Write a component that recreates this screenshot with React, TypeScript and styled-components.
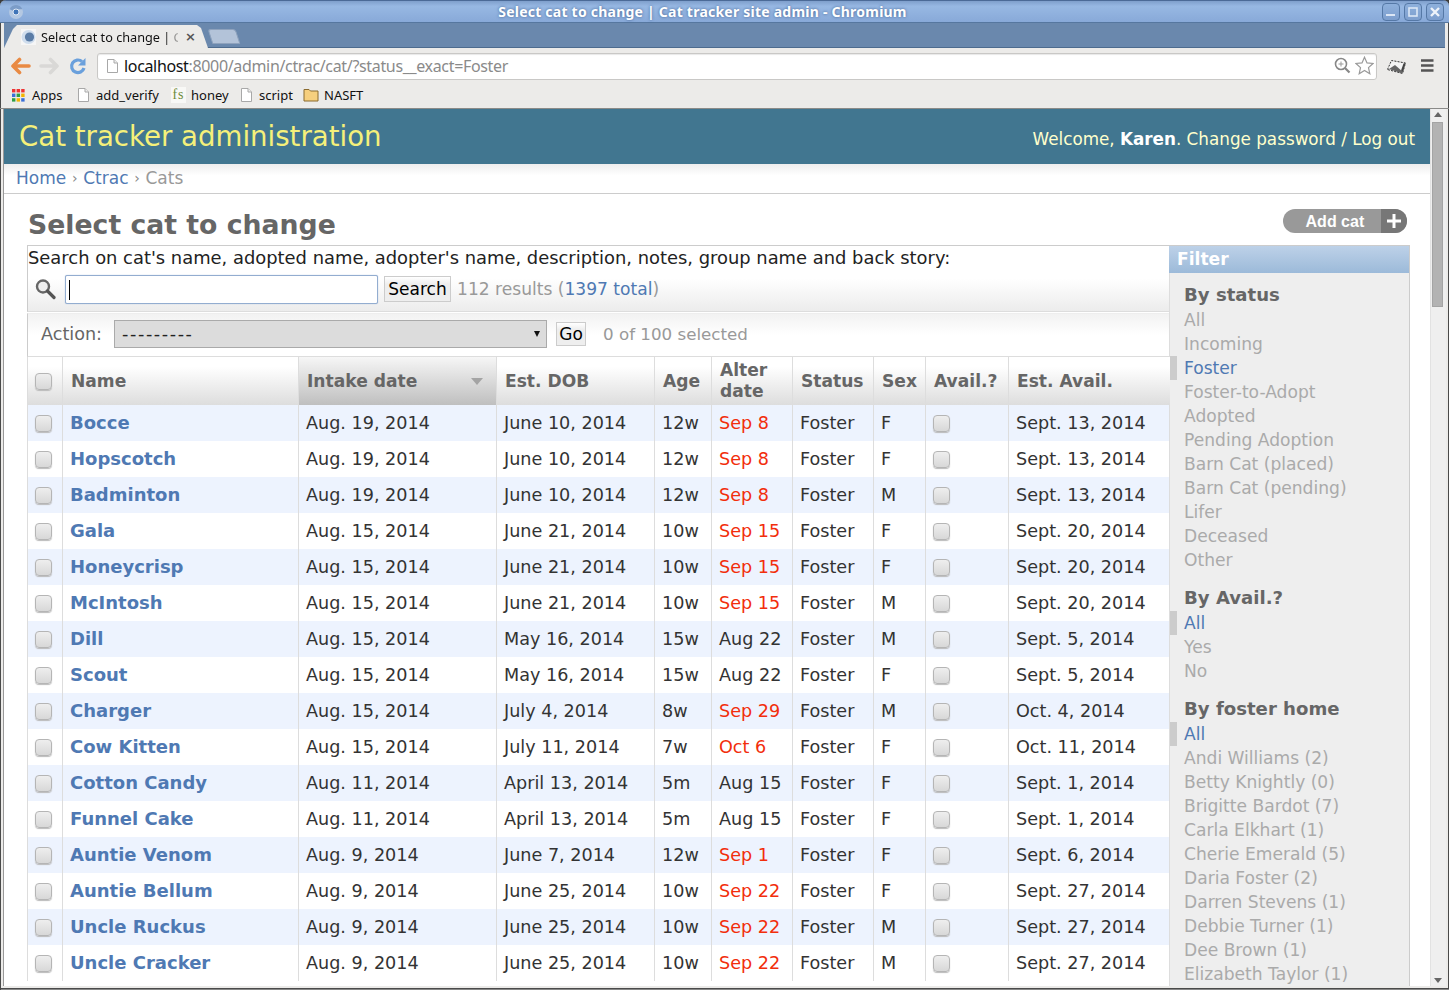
import React from "react";
import styled, { createGlobalStyle } from "styled-components";

const Global = createGlobalStyle`
  html, body { margin: 0; padding: 0; width: 1449px; height: 990px; overflow: hidden; background: #3c3c3c; }
  * { box-sizing: border-box; }
  #root { width: 1449px; height: 990px; }
`;
const V = `"DejaVu Sans", sans-serif`;
const UI = `"Noto Sans", "Open Sans", sans-serif`;
const LINK = "#4f79b3";

const Win = styled.div`
  width: 1449px; height: 990px; display: flex; flex-direction: column; overflow: hidden;
  background: #ecebe9; border-radius: 6px 6px 0 0; font-family: ${V};
  box-shadow: inset 1px 0 #4a4a4a, inset -1px 0 #4a4a4a;
`;
const TitleBar = styled.div`
  height: 23px; flex: none; position: relative; display: flex; align-items: center; justify-content: center;
  background: linear-gradient(#7f9fcc, #97b8e3 25%, #88a9d8); border-top: 1px solid #4b6a97; border-bottom: 1px solid #56779f;
  padding: 0 44px 0 0;
`;
const TitleText = styled.span`
  color: #fff; font: 700 14px ${UI}; letter-spacing: .23px; text-shadow: 0 0 3px #3f5f90; white-space: nowrap;
`;
const Logo = styled.svg` position: absolute; left: 8px; top: 3px; `;
const WinBtns = styled.div` position: absolute; right: 5px; top: 2px; display: flex; gap: 4px; `;
const WinBtn = styled.div`
  width: 18px; height: 18px; border: 1px solid #5578a6; border-radius: 4px; display: flex; align-items: center; justify-content: center;
  background: linear-gradient(#8eb0dc, #7d9ecd);
`;
const TabStrip = styled.div`
  height: 25px; flex: none; background: #6a88ad; display: flex; align-items: flex-end; border-bottom: 1px solid #4d6b8e; margin: 0 4px;
`;
const Tab = styled.div`
  width: 204px; height: 23px; margin-bottom: -1px; flex: none; background: #ecebe9; clip-path: polygon(0 100%, 9px 4px, 13px 0, 193px 0, 197px 3px, 204px 100%);
  display: flex; align-items: center; padding: 0 0 0 17px; gap: 5px; font: 13px ${UI}; color: #111;
`;
const TabLabel = styled.span`
  width: 137px; white-space: nowrap; font-size: 12.7px;
  -webkit-mask-image: linear-gradient(90deg, #000 124px, rgba(0,0,0,.25) 137px);
`;
const TabX = styled.span` font: 700 13px ${V}; color: #555; margin-left: 2px; `;
const NewTab = styled.div`
  width: 28px; height: 15px; margin: 0 0 3px 2px; background: #b3c3d9; border: 1px solid #8ea2bd; transform: skewX(18deg); border-radius: 3px 3px 1px 1px;
`;
const Toolbar = styled.div` height: 36px; flex: none; display: flex; align-items: center; padding: 0 0 0 11px; `;
const NavIcon = styled.svg<{ $ml?: number }>` flex: none; margin-left: ${(p) => p.$ml ?? 0}px; `;
const Omni = styled.div`
  width: 1280px; height: 27px; margin-left: 10px; background: #fff; border: 1px solid #c9c8c6; border-radius: 3px; display: flex; align-items: center; padding: 0 0 0 7px;
  font: 16px ${UI}; letter-spacing: -.34px; color: #8a8a8a; white-space: nowrap; position: relative; box-shadow: inset 0 1px 1px #e8e8e8;
`;
const Host = styled.span` color: #111; margin-left: 4px; `;
const OmniRight = styled.div` position: absolute; right: 2px; top: 2px; display: flex; gap: 4px; align-items: center; `;
const Bookmarks = styled.div`
  height: 24px; flex: none; display: flex; align-items: center; padding: 0 0 2px 11px; font: 13px ${UI}; color: #111;
`;
const Bookmark = styled.div<{ $w: number }>` display: flex; align-items: center; gap: 5px; width: ${(p) => p.$w}px; white-space: nowrap; flex: none; `;
const Fs = styled.span` width: 15px; height: 16px; background: #f8f8f6; text-align: center; font: 14px/15px "Liberation Serif", serif; color: #6d8b3a; letter-spacing: 1px; `;
const Body = styled.div`
  flex: 1; min-height: 0; display: flex; padding: 0 3px 4px 4px; border-top: 1px solid #8a8a88;
  box-shadow: inset 1px 0 #4a4a4a, inset 0 -1px #888, inset 0 -2px #4a4a4a;
`;
const FrameLine = styled.div` width: 1px; margin-left: -1px; background: #999; flex: none; `;
const Page = styled.div` width: 1426px; background: #fff; overflow: hidden; flex: none; `;
const ScrollBar = styled.div` width: 16px; flex: none; background: #efefef; position: relative; padding: 13px 2px 0 1px; border-left: 1px solid #e2e2e2; `;
const Thumb = styled.div` height: 185px; width: 11px; background: #b3b3b3; border: 1px solid #a4a4a4; `;
const ArrowUp = styled.div` position: absolute; top: 3px; left: 3px; width: 0; height: 0; border: 4px solid transparent; border-top: 0; border-bottom: 5px solid #666; `;
const ArrowDown = styled.div` position: absolute; bottom: 3px; left: 3px; width: 0; height: 0; border: 4px solid transparent; border-bottom: 0; border-top: 5px solid #666; `;

const Header = styled.header`
  height: 55px; background: #417690; display: flex; justify-content: space-between; align-items: center; padding: 0 15px;
`;
const Brand = styled.h1` margin: 0; font: 400 27.6px ${V}; color: #f5f07a; `;
const Welcome = styled.div` font: 16.8px ${V}; color: #ffc; padding-top: 5px; strong { color: #fff; font-weight: 700; } `;
const Crumbs = styled.nav`
  height: 30px; padding: 0 12px 2px; display: flex; align-items: center; font: 17px ${V}; color: #999; border-bottom: 1px solid #ccc;
  background: linear-gradient(#eee, #fff 40%);
  a { color: ${LINK}; }
`;
const Sep = styled.span` font-size: 14px; color: #888; margin: 0 5.7px; `;
const Content = styled.main` padding: 0 0 0 23px; `;
const TitleRow = styled.div` height: 51px; width: 1380px; display: flex; justify-content: space-between; align-items: flex-start; `;
const H2 = styled.h2` margin: 13px 0 0 1px; font: 700 26.7px/36px ${V}; color: #666; `;
const AddBtn = styled.div`
  margin-top: 15px; height: 24px; width: 124px; display: flex; border-radius: 12px; overflow: hidden; background: #999; color: #fff; font: 700 16px "Liberation Sans", sans-serif;
`;
const AddLabel = styled.span` width: 97px; text-align: right; padding-right: 15px; line-height: 25px; `;
const AddPlus = styled.span` width: 26px; margin-left: 2px; background: #777; display: flex; align-items: center; justify-content: center; `;
const Columns = styled.div` display: flex; `;
const Main = styled.div` width: 1142px; flex: none; border-top: 1px solid #ccc; `;
const SearchBar = styled.div`
  height: 66px; border-left: 1px solid #ccc; border-bottom: 1px solid #ddd; background: linear-gradient(#fff 50%, #ececec); color: #222; font: 17.9px ${V};
`;
const SearchHelp = styled.div` height: 24px; line-height: 23px; white-space: nowrap; `;
const SearchRow = styled.div` display: flex; align-items: center; height: 33px; padding-top: 5px; `;
const SearchIcon = styled.svg` margin: 0 9px 0 6px; flex: none; `;
const SearchInput = styled.div`
  width: 313px; height: 29px; background: #fff; border: 1px solid #93add0; border-radius: 2px; box-shadow: 0 0 1px #93add0; padding: 4px 3px;
`;
const Caret = styled.div` width: 1px; height: 20px; background: #000; `;
const Btn = styled.button<{ $w: number; $h: number; $mr: number; $ml: number }>`
  width: ${(p) => p.$w}px; height: ${(p) => p.$h}px; margin: 0 ${(p) => p.$mr}px 0 ${(p) => p.$ml}px; padding: 0;
  background: linear-gradient(#fff, #eee 30%); border: 1px solid #ccc; color: #000; font: 17px ${V}; flex: none;
`;
const Results = styled.span` color: #999; font: 17.1px ${V}; a { color: ${LINK}; } `;
const Counter = styled.span` color: #999; font: 16.7px ${V}; `;
const ActionBar = styled.div`
  height: 44px; margin-top: 1px; border-left: 1px solid #ccc; border-bottom: 1px solid #ddd; border-top: 1px solid #eee; background: linear-gradient(#f2f2f2, #fff 50%);
  display: flex; align-items: center; padding: 0 0 2px 13px; font: 17.6px ${V}; color: #666;
`;
const Sel = styled.div`
  width: 433px; height: 28px; margin: 0 9px 0 12px; background: #dcdcdc; border: 1px solid #aaa; color: #222; padding: 0 6px 0 7px; display: flex; justify-content: space-between; align-items: center; font-size: 17.6px; letter-spacing: 1.6px;
`;
const Caretdown = styled.span` width: 0; height: 0; border: 3.5px solid transparent; border-top: 6px solid #111; border-bottom: 0; `;
const Tbl = styled.table`
  table-layout: fixed; width: 1142px; border-collapse: separate; border-spacing: 0; font: 17.6px ${V}; color: #333; border-left: 1px solid #ddd;
`;
const Th = styled.th<{ $sorted?: boolean }>`
  height: 48px; padding: 0 8px; text-align: left; font-weight: 700; font-size: 17.1px; line-height: 21px; color: #666; border-left: 1px solid #ddd; position: relative;
  background: ${(p) => (p.$sorted ? "linear-gradient(#f6f6f6, #bfbfbf)" : "linear-gradient(#fff 20%, #ddd)")};
  &:first-child { border-left: 0; padding: 0 0 0 7px; }
`;
const SortMark = styled.span`
  position: absolute; right: 13px; top: 21px; width: 0; height: 0; border: 6px solid transparent; border-top: 7px solid #a4a4a4; border-bottom: 0;
`;
const Td = styled.td`
  height: 36px; padding: 0 7px; white-space: nowrap; border-left: 1px solid #ddd; overflow: hidden;
  &:first-child { border-left: 0; padding: 0 0 0 7px; }
`;
const Row = styled.tr<{ $odd: boolean }>` background: ${(p) => (p.$odd ? "#edf3fe" : "#fff")}; `;
const NameLink = styled.a` color: ${LINK}; font-weight: 700; font-size: 18px; vertical-align: 1px; `;
const Alter = styled.span<{ $red: boolean }>` color: ${(p) => (p.$red ? "#f22e0c" : "#333")}; `;
const HeadCheck = styled.span`
  display: inline-block; width: 17px; height: 17px; vertical-align: middle; border: 1px solid #b5b5b5; border-radius: 4px; background: linear-gradient(#eee, #d8d8d8); box-shadow: 0 1px 1px #bbb;
`;
const Check = styled(HeadCheck)` margin-top: -2px; `;
const Filter = styled.aside` width: 241px; flex: none; border-right: 1px solid #ccc; background: #eee; `;
const FilterHead = styled.div`
  height: 28px; background: linear-gradient(#bdd1e8, #9cbad9); color: #fff; font: 700 17.1px/27px ${V}; padding-left: 8px; border-top: 1px solid #ccc;
`;
const FilterBody = styled.div` padding: 9px 0 0 0; border-left: 1px solid #ddd; `;
const FilterTitle = styled.div` font: 700 18.1px/26px ${V}; color: #666; padding-left: 14px; height: 26px; `;
const FilterGroup = styled.div<{ $gap: number }>` margin-bottom: ${(p) => p.$gap}px; `;
const FilterItem = styled.div<{ $on?: boolean }>`
  height: 24px; line-height: 24px; font-size: 17.1px; padding-left: ${(p) => (p.$on ? 7 : 14)}px; color: ${(p) => (p.$on ? LINK : "#aaa")}; white-space: nowrap;
  border-left: ${(p) => (p.$on ? "7px solid #ccc" : "0")};
`;

const rows: string[][] = [
  ["Bocce","Aug. 19, 2014","June 10, 2014","12w","Sep 8","F","Sept. 13, 2014"],
  ["Hopscotch","Aug. 19, 2014","June 10, 2014","12w","Sep 8","F","Sept. 13, 2014"],
  ["Badminton","Aug. 19, 2014","June 10, 2014","12w","Sep 8","M","Sept. 13, 2014"],
  ["Gala","Aug. 15, 2014","June 21, 2014","10w","Sep 15","F","Sept. 20, 2014"],
  ["Honeycrisp","Aug. 15, 2014","June 21, 2014","10w","Sep 15","F","Sept. 20, 2014"],
  ["McIntosh","Aug. 15, 2014","June 21, 2014","10w","Sep 15","M","Sept. 20, 2014"],
  ["Dill","Aug. 15, 2014","May 16, 2014","15w","Aug 22","M","Sept. 5, 2014"],
  ["Scout","Aug. 15, 2014","May 16, 2014","15w","Aug 22","F","Sept. 5, 2014"],
  ["Charger","Aug. 15, 2014","July 4, 2014","8w","Sep 29","M","Oct. 4, 2014"],
  ["Cow Kitten","Aug. 15, 2014","July 11, 2014","7w","Oct 6","F","Oct. 11, 2014"],
  ["Cotton Candy","Aug. 11, 2014","April 13, 2014","5m","Aug 15","F","Sept. 1, 2014"],
  ["Funnel Cake","Aug. 11, 2014","April 13, 2014","5m","Aug 15","F","Sept. 1, 2014"],
  ["Auntie Venom","Aug. 9, 2014","June 7, 2014","12w","Sep 1","F","Sept. 6, 2014"],
  ["Auntie Bellum","Aug. 9, 2014","June 25, 2014","10w","Sep 22","F","Sept. 27, 2014"],
  ["Uncle Ruckus","Aug. 9, 2014","June 25, 2014","10w","Sep 22","M","Sept. 27, 2014"],
  ["Uncle Cracker","Aug. 9, 2014","June 25, 2014","10w","Sep 22","M","Sept. 27, 2014"],
];
const widths = [34, 236, 198, 158, 57, 81, 81, 52, 83, 162];
const heads = ["Intake date", "Est. DOB", "Age", "Alter date", "Status", "Sex", "Avail.?", "Est. Avail."];

const filters: { title: string; on: number; gap: number; items: string[] }[] = [
  { title: "By status", on: 3, gap: 13, items: ["All","Incoming","Foster","Foster-to-Adopt","Adopted","Pending Adoption","Barn Cat (placed)","Barn Cat (pending)","Lifer","Deceased","Other"] },
  { title: "By Avail.?", on: 1, gap: 13, items: ["All","Yes","No"] },
  { title: "By foster home", on: 1, gap: 0, items: ["All","Andi Williams (2)","Betty Knightly (0)","Brigitte Bardot (7)","Carla Elkhart (1)","Cherie Emerald (5)","Daria Foster (2)","Darren Stevens (1)","Debbie Turner (1)","Dee Brown (1)","Elizabeth Taylor (1)"] },
];

const PageIcon = () => (
  <svg width="15" height="16" viewBox="0 0 15 16">
    <path d="M2.5 1.5h6.5l3.5 3.5v9.5h-10z" fill="#fff" stroke="#a8a8a8" />
    <path d="M9 1.5v3.5h3.5" fill="#eee" stroke="#a8a8a8" />
  </svg>
);

export default function App() {
  return (
    <Win>
      <Global />
      <TitleBar>
        <Logo width="16" height="16" viewBox="0 0 16 16">
          <circle cx="8" cy="8" r="7" fill="#b4c8e2" />
          <path d="M1.6 5.2A7 7 0 0 1 14.4 5.2H8.5a3 3 0 0 0-3.6 1.6z" fill="#7b9cc8" />
          <circle cx="8" cy="8" r="3" fill="#3f74b8" stroke="#dfe8f4" />
        </Logo>
        <TitleText>Select cat to change | Cat tracker site admin - Chromium</TitleText>
        <WinBtns>
          <WinBtn>
            <svg width="10" height="10" viewBox="0 0 10 10"><rect x="0" y="7" width="9" height="2" fill="#dbe6f5" /></svg>
          </WinBtn>
          <WinBtn>
            <svg width="10" height="10" viewBox="0 0 10 10"><rect x="1" y="1" width="8" height="8" fill="none" stroke="#dbe6f5" strokeWidth="1.6" /></svg>
          </WinBtn>
          <WinBtn>
            <svg width="10" height="10" viewBox="0 0 10 10"><path d="M1 1l8 8M9 1l-8 8" stroke="#eef3fa" strokeWidth="2.4" /></svg>
          </WinBtn>
        </WinBtns>
      </TitleBar>
      <TabStrip>
        <Tab>
          <svg width="15" height="16" viewBox="0 0 15 16">
            <rect width="15" height="16" fill="#f6f6f6" />
            <circle cx="7.5" cy="8" r="7" fill="#cfdded" />
            <circle cx="8.5" cy="8" r="4.6" fill="#5a7ca6" />
          </svg>
          <TabLabel>Select cat to change | C</TabLabel>
          <TabX>×</TabX>
        </Tab>
        <NewTab />
      </TabStrip>
      <Toolbar>
        <NavIcon width="20" height="18" viewBox="0 0 20 18">
          <path d="M8.5 2.5 L2 9 L8.5 15.5 M3 9 H18" fill="none" stroke="#e98a43" strokeWidth="3.6" strokeLinecap="round" strokeLinejoin="round" />
        </NavIcon>
        <NavIcon $ml={8} width="20" height="18" viewBox="0 0 20 18">
          <path d="M11.5 2.5 L18 9 L11.5 15.5 M17 9 H2" fill="none" stroke="#d9d8d6" strokeWidth="3.6" strokeLinecap="round" strokeLinejoin="round" />
        </NavIcon>
        <NavIcon $ml={10} width="18" height="18" viewBox="0 0 18 18">
          <path d="M15 11a6.3 6.3 0 1 1-2-6.5" fill="none" stroke="#6aa0dc" strokeWidth="3.2" />
          <path d="M16.5 1v7.5H9z" fill="#6aa0dc" />
        </NavIcon>
        <Omni>
          <PageIcon />
          <Host>localhost</Host>:8000/admin/ctrac/cat/?status__exact=Foster
          <OmniRight>
            <svg width="17" height="17" viewBox="0 0 17 17">
              <circle cx="7" cy="7" r="5.5" fill="#fff" stroke="#888" strokeWidth="1.6" />
              <path d="M11 11l4.5 4.5" stroke="#888" strokeWidth="2.2" />
              <path d="M4.5 7h5M7 4.5v5" stroke="#999" />
            </svg>
            <svg width="19" height="19" viewBox="0 0 19 19">
              <path d="M9.5 1.2l2.5 5.7 6 .6-4.5 4.1 1.3 6.1-5.3-3.2-5.3 3.2 1.3-6.1L1 7.5l6-.6z" fill="#fff" stroke="#999" strokeWidth="1.2" />
            </svg>
          </OmniRight>
        </Omni>
        <NavIcon $ml={9} width="21" height="17" viewBox="0 0 21 17">
          <path d="M1.5 11.5L5.5 2.5 19.5 5 16.5 15.5z" fill="#f4f4f4" stroke="#333" strokeDasharray="2 1.2" />
          <path d="M3 11l6-4 8 7-1 1.5z" fill="#666" />
          <path d="M17 14l2.5-9-2 .5-2.5 7z" fill="#444" />
        </NavIcon>
        <NavIcon $ml={13} width="14" height="14" viewBox="0 0 14 14">
          <path d="M1 1.5h12.5M1 6.5h12.5M1 11.5h12.5" stroke="#555" strokeWidth="2.6" />
        </NavIcon>
      </Toolbar>
      <Bookmarks>
        <Bookmark $w={65}>
          <svg width="16" height="15" viewBox="0 0 16 15">
            {[0, 1, 2].flatMap((r) =>
              [0, 1, 2].map((c) => (
                <rect key={`${r}${c}`} x={1 + c * 4.6} y={1 + r * 4.6} width="3.4" height="3.4" fill={[["#e33","#e33","#e33"],["#3a6fd8","#2f9e44","#f4b400"],["#2f9e44","#f4b400","#3a6fd8"]][r][c]} />
              )),
            )}
          </svg>
          Apps
        </Bookmark>
        <Bookmark $w={95}><PageIcon />add_verify</Bookmark>
        <Bookmark $w={68}><Fs>fs</Fs>honey</Bookmark>
        <Bookmark $w={64}><PageIcon />script</Bookmark>
        <Bookmark $w={80}>
          <svg width="16" height="14" viewBox="0 0 16 14">
            <path d="M1 3V1.5h5l1.5 1.5H15v10H1z" fill="#f6cf7e" stroke="#8a6a2e" />
          </svg>
          NASFT
        </Bookmark>
      </Bookmarks>
      <Body>
        <FrameLine />
        <Page>
          <Header>
            <Brand>Cat tracker administration</Brand>
            <Welcome>Welcome, <strong>Karen</strong>. Change password / Log out</Welcome>
          </Header>
          <Crumbs>
            <a>Home</a><Sep>›</Sep><a>Ctrac</a><Sep>›</Sep>Cats
          </Crumbs>
          <Content>
            <TitleRow>
              <H2>Select cat to change</H2>
              <AddBtn>
                <AddLabel>Add cat</AddLabel>
                <AddPlus>
                  <svg width="16" height="16" viewBox="0 0 16 16"><path d="M8 1v14M1 8h14" stroke="#fff" strokeWidth="3" /></svg>
                </AddPlus>
              </AddBtn>
            </TitleRow>
            <Columns>
              <Main>
                <SearchBar>
                  <SearchHelp>Search on cat's name, adopted name, adopter's name, description, notes, group name and back story:</SearchHelp>
                  <SearchRow>
                    <SearchIcon width="22" height="22" viewBox="0 0 22 22">
                      <circle cx="9" cy="8.5" r="6" fill="#eee" stroke="#666" strokeWidth="2.4" />
                      <path d="M13.5 13l6.5 6.5" stroke="#555" strokeWidth="3.2" strokeLinecap="round" />
                    </SearchIcon>
                    <SearchInput><Caret /></SearchInput>
                    <Btn $w={67} $h={26} $ml={6} $mr={6}>Search</Btn>
                    <Results>112 results (<a>1397 total</a>)</Results>
                  </SearchRow>
                </SearchBar>
                <ActionBar>
                  Action:
                  <Sel>---------<Caretdown /></Sel>
                  <Btn $w={30} $h={24} $ml={0} $mr={17}>Go</Btn>
                  <Counter>0 of 100 selected</Counter>
                </ActionBar>
                <Tbl>
                  <colgroup>
                    {widths.map((w, i) => <col key={i} style={{ width: w }} />)}
                  </colgroup>
                  <thead>
                    <tr>
                      <Th><HeadCheck /></Th>
                      <Th>Name</Th>
                      {heads.map((h, i) => (
                        <Th key={h} $sorted={i === 0}>{h}{i === 0 && <SortMark />}</Th>
                      ))}
                    </tr>
                  </thead>
                  <tbody>
                    {rows.map((r, i) => (
                      <Row key={i} $odd={i % 2 === 0}>
                        <Td><Check /></Td>
                        <Td><NameLink>{r[0]}</NameLink></Td>
                        <Td>{r[1]}</Td>
                        <Td>{r[2]}</Td>
                        <Td>{r[3]}</Td>
                        <Td><Alter $red={r[4].startsWith("Sep") || r[4].startsWith("Oct")}>{r[4]}</Alter></Td>
                        <Td>Foster</Td>
                        <Td>{r[5]}</Td>
                        <Td><Check /></Td>
                        <Td>{r[6]}</Td>
                      </Row>
                    ))}
                  </tbody>
                </Tbl>
              </Main>
              <Filter>
                <FilterHead>Filter</FilterHead>
                <FilterBody>
                  {filters.map((f) => (
                    <FilterGroup key={f.title} $gap={f.gap}>
                      <FilterTitle>{f.title}</FilterTitle>
                      {f.items.map((it, i) => (
                        <FilterItem key={it} $on={i + 1 === f.on}>{it}</FilterItem>
                      ))}
                    </FilterGroup>
                  ))}
                </FilterBody>
              </Filter>
            </Columns>
          </Content>
        </Page>
        <ScrollBar>
          <ArrowUp />
          <Thumb />
          <ArrowDown />
        </ScrollBar>
      </Body>
    </Win>
  );
}
